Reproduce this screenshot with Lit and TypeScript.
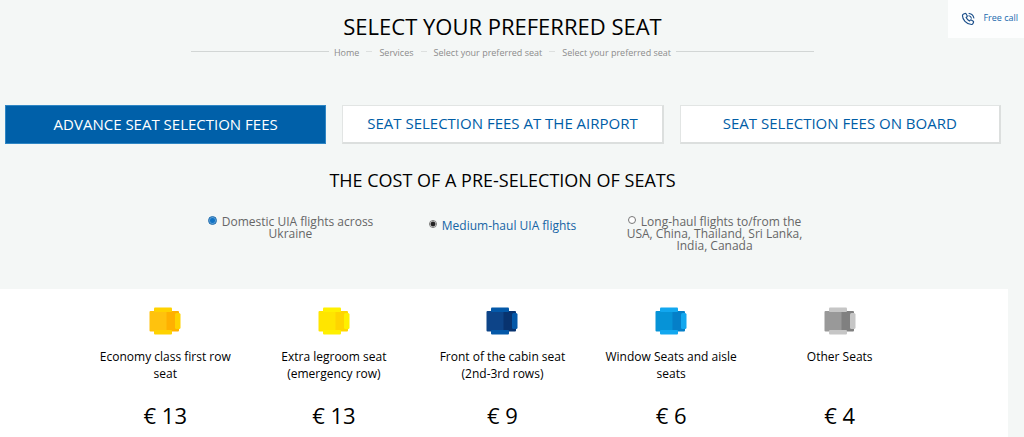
import { LitElement, html, css, svg } from "lit";
import { customElement, property, state } from "lit/decorators.js";
import { classMap } from "lit/directives/class-map.js";

interface Palette {
  seat: string;
  back: string;
  arm: string;
  head: string;
}

interface Fare {
  label: string;
  price: number;
  palette: Palette;
}

const FARES: Fare[] = [
  { label: "Economy class first row seat", price: 13, palette: { seat: "#ffc20e", back: "#ffb000", arm: "#ffd200", head: "#ffd200" } },
  { label: "Extra legroom seat (emergency row)", price: 13, palette: { seat: "#ffe500", back: "#ffd400", arm: "#fff000", head: "#fff000" } },
  { label: "Front of the cabin seat (2nd-3rd rows)", price: 9, palette: { seat: "#0d4488", back: "#08336f", arm: "#0458a8", head: "#0458a8" } },
  { label: "Window Seats and aisle seats", price: 6, palette: { seat: "#0693d7", back: "#057fc8", arm: "#12a7ef", head: "#12a7ef" } },
  { label: "Other Seats", price: 4, palette: { seat: "#999999", back: "#808080", arm: "#c6c6c6", head: "#c6c6c6" } },
];

const CRUMBS = ["Home", "Services", "Select your preferred seat", "Select your preferred seat"];

const TABS = ["Advance seat selection fees", "Seat selection fees at the airport", "Seat selection fees on board"];

@customElement("seat-icon")
export class SeatIcon extends LitElement {
  static styles = css`
    :host {
      display: block;
    }
    .seat {
      display: block;
      width: 32px;
      height: 28px;
    }
  `;

  @property({ attribute: false }) palette!: Palette;

  render() {
    const p = this.palette;
    return html`<svg class="seat" viewBox="0 0 32 28" aria-hidden="true">
      ${svg`
        <rect x="0.5" y="4" width="17.5" height="20.5" rx="1" fill=${p.seat} />
        <path d="M17.5 4H29q1 0 1 1V23.500q0 1-1 1H17.500z" fill=${p.back} />
        <rect x="5" y="0.5" width="18" height="4.500" rx="1" fill=${p.arm} />
        <rect x="5" y="23" width="18" height="4.500" rx="1" fill=${p.arm} />
        <rect x="26" y="6" width="5.500" height="16" rx="1.500" fill=${p.head} />
      `}
    </svg>`;
  }
}

@customElement("app-root")
export class AppRoot extends LitElement {
  static styles = css`
    :host {
      display: block;
      position: relative;
      min-height: 100vh;
      background: #f4f7f6;
      color: #000;
      font-family: "Open Sans", "Noto Sans", sans-serif;
    }
    .page {
      margin-right: 16px;
    }
    .header {
      display: flex;
      flex-direction: column;
      align-items: center;
      padding: 11px 3px 0 0;
    }
    .title {
      margin: 0;
      font-size: 22px;
      line-height: 30px;
      font-weight: 400;
      text-transform: uppercase;
    }
    .crumbs {
      display: flex;
      align-items: center;
      width: 62%;
      margin-top: 5px;
      font-size: 9px;
      line-height: 14px;
    }
    .rule {
      flex: 1;
      height: 1px;
      margin-bottom: 4px;
      background: #d2d6d5;
    }
    .list {
      display: flex;
      margin: 0;
      padding: 0 5px;
      list-style: none;
    }
    .crumb {
      display: flex;
      align-items: center;
    }
    .crumb + .crumb::before {
      content: "";
      width: 6px;
      height: 1px;
      margin: 0 7px 4px;
      background: #dde0df;
    }
    .crumb-link {
      color: #8c8c8c;
      text-decoration: none;
    }
    .tabs {
      display: grid;
      grid-template-columns: repeat(3, 1fr);
      gap: 16px;
      padding: 0 7px 0 5px;
      margin-top: 45px;
    }
    .tab {
      height: 39px;
      padding: 0 8px 2px;
      border: 1px solid #e2e5e4;
      border-right: 2px solid #dcdfde;
      border-bottom: 2px solid #dcdfde;
      background: #fff;
      color: #005da6;
      font-family: inherit;
      font-size: 15px;
      font-weight: 400;
      line-height: 20px;
      text-transform: uppercase;
      cursor: pointer;
    }
    .tab.active {
      border-color: #2f86c4;
      border-width: 1px;
      background: #0060a9;
      color: #fff;
    }
    .subtitle {
      margin: 24px 0 0;
      padding-right: 3px;
      font-size: 18px;
      line-height: 24px;
      font-weight: 400;
      text-align: center;
      text-transform: uppercase;
    }
    .routes {
      display: grid;
      grid-template-columns: repeat(3, 180px);
      justify-content: center;
      gap: 32px;
      margin: 24px 0 0;
      padding: 0 3px 33px 0;
      border: 0;
    }
    .route {
      min-height: 36px;
      color: #666;
      font-size: 12px;
      line-height: 12px;
      text-align: center;
      cursor: pointer;
    }
    .route.current {
      padding-top: 4px;
      color: #1464a5;
    }
    .radio {
      appearance: none;
      box-sizing: border-box;
      width: 8px;
      height: 8px;
      margin: 0 2px 0 0;
      border: 1px solid #777;
      border-radius: 50%;
      background: #fff;
      vertical-align: 2px;
    }
    .radio:checked {
      background: radial-gradient(circle, #222 2px, #fff 3px);
    }
    .radio.primary {
      width: 9px;
      height: 9px;
      vertical-align: 1px;
    }
    .radio.primary:checked {
      border-color: #1565a8;
      background: radial-gradient(circle, #1173c4 2px, #9cc8ec 4px);
    }
    .fares {
      display: grid;
      grid-template-columns: repeat(5, 1fr);
      margin: 0;
      padding: 18px 84px 17px 81px;
      background: #fff;
      list-style: none;
    }
    .fare {
      display: flex;
      flex-direction: column;
      align-items: center;
      text-align: center;
    }
    .name {
      max-width: 136px;
      min-height: 34px;
      margin: 13px 0 0;
      font-size: 12px;
      line-height: 17px;
    }
    .price {
      margin: 19px 0 0;
      font-size: 22px;
      line-height: 28px;
    }
    .call {
      position: absolute;
      top: 0;
      right: 0;
      display: flex;
      align-items: center;
      gap: 8px;
      height: 38px;
      padding: 0 6px 2px 13px;
      box-sizing: border-box;
      background: #fdfefe;
      color: #1a6aae;
      font-size: 9px;
      line-height: 12px;
      text-decoration: none;
    }
    .phone {
      width: 14px;
      height: 14px;
      margin-top: 2px;
    }
  `;

  @state() private tab = 0;

  private renderRoute(label: string, value: string, group: string, checked: boolean, current = false) {
    return html`<label class=${classMap({ route: true, current })}
      ><input
        class=${classMap({ radio: true, primary: value === "domestic" })}
        type="radio"
        name=${group}
        value=${value}
        ?checked=${checked}
      />
      ${label}</label
    >`;
  }

  render() {
    return html`
      <main class="page">
        <header class="header">
          <h1 class="title">Select your preferred seat</h1>
          <nav class="crumbs" aria-label="Breadcrumb">
            <span class="rule"></span>
            <ol class="list">
              ${CRUMBS.map((c) => html`<li class="crumb"><a class="crumb-link" href="#">${c}</a></li>`)}
            </ol>
            <span class="rule"></span>
          </nav>
        </header>
        <div class="tabs">
          ${TABS.map(
            (t, i) => html`<button
              type="button"
              class=${classMap({ tab: true, active: i === this.tab })}
              @click=${() => (this.tab = i)}
            >
              ${t}
            </button>`
          )}
        </div>
        <h2 class="subtitle">The cost of a pre-selection of seats</h2>
        <fieldset class="routes" aria-label="Flight type">
          ${this.renderRoute("Domestic UIA flights across Ukraine", "domestic", "domestic", true)}
          ${this.renderRoute("Medium-haul UIA flights", "medium", "haul", true, true)}
          ${this.renderRoute("Long-haul flights to/from the USA, China, Thailand, Sri Lanka, India, Canada", "long", "haul", false)}
        </fieldset>
        <ul class="fares">
          ${FARES.map(
            (f) => html`<li class="fare">
              <seat-icon .palette=${f.palette}></seat-icon>
              <p class="name">${f.label}</p>
              <p class="price">€ ${f.price}</p>
            </li>`
          )}
        </ul>
      </main>
      <a class="call" href="#">
        <svg class="phone" viewBox="0 0 24 24" fill="none" stroke="#1b4f8a" stroke-width="2" stroke-linejoin="round" stroke-linecap="round" aria-hidden="true">
          <path d="M4.500 3.500 7 2.500q1-.3 1.600.6l2 3.400q.5 1-.3 1.700L8.800 9.500q1.700 3.500 5.700 5.900l1.400-1.400q.8-.7 1.700-.2l3.400 2.100q.9.700.5 1.600l-1.200 2.600q-.7 1.500-2.400 1.300Q11 20.700 6.800 16 2.700 11.400 2.500 6.300 2.600 4.300 4.500 3.500z" />
          <path d="M13.500 6.500q3.500.5 4.200 4M14 2.500q6.800.8 8 7.800" />
        </svg>
        Free call
      </a>
    `;
  }
}
